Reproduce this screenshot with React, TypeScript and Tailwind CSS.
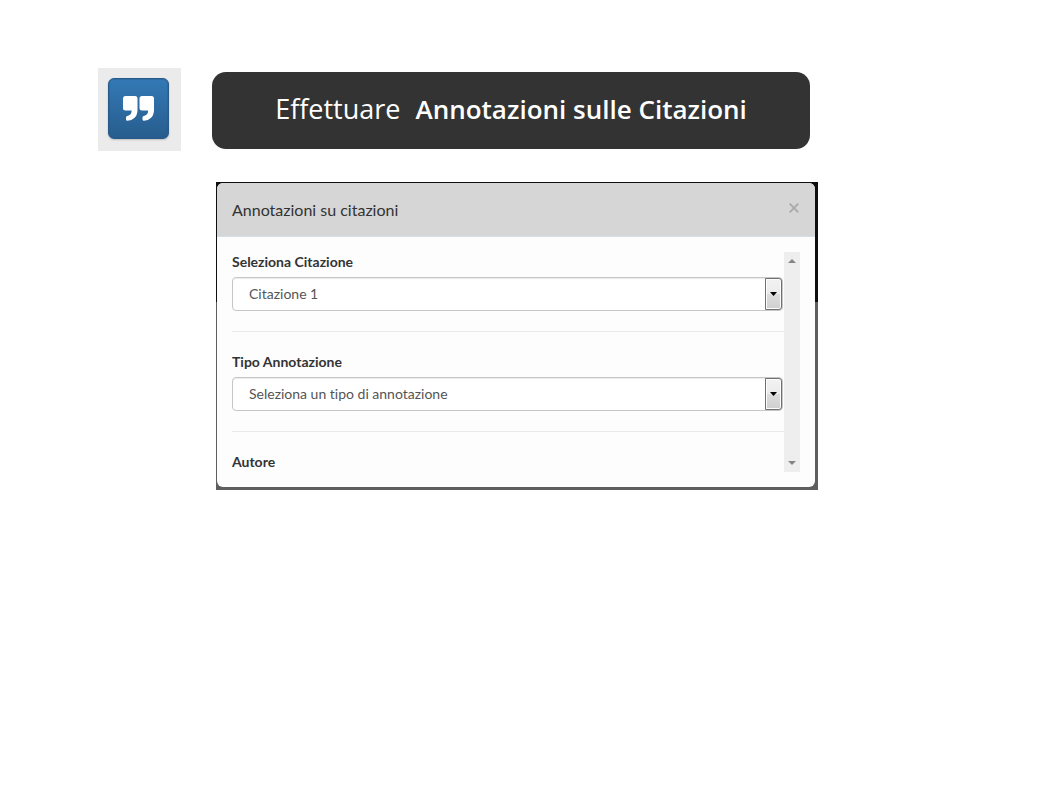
import { useRef } from "react";

type SelectFieldProps = {
  id: string;
  label: string;
  value: string;
};

function SelectField({ id, label, value }: SelectFieldProps) {
  return (
    <div className="mb-5 border-b border-[#eaeaea] pb-5">
      <label htmlFor={id} className="mb-[5px] block text-sm leading-5 font-bold text-[#333333]">
        {label}
      </label>
      <div className="relative mr-px">
        <select
          id={id}
          className="block h-[34px] w-full appearance-none rounded border border-[#c6c6c6] bg-white pr-6 pl-4 text-sm text-[#555555] shadow-[inset_0_1px_1px_rgba(0,0,0,0.08)] [font-variant-ligatures:none]"
        >
          <option>{value}</option>
        </select>
        <span className="pointer-events-none absolute inset-y-px right-px flex w-[17px] items-center justify-center rounded-r-[3px] border border-[#707070] bg-[linear-gradient(#f2f2f2_0%,#ebebeb_50%,#dddddd_50%,#cfcfcf_100%)] shadow-[inset_0_0_0_1px_#fcfcfc]">
          <svg width="7" height="4" viewBox="0 0 7 4" aria-hidden="true">
            <path d="M0 0h7L3.5 4z" fill="#000" />
          </svg>
        </span>
      </div>
    </div>
  );
}

function QuoteBadge() {
  return (
    <div className="flex h-[83px] w-[83px] shrink-0 items-center justify-center bg-[#ebebeb] pr-0.5 pb-0.5">
      <button
        type="button"
        aria-label="Citazioni"
        className="flex h-[61px] w-[61px] items-center justify-center rounded-md border border-[#285a8a] bg-linear-to-b from-[#3379b5] to-[#275d8e] shadow-[inset_0_0_0_1px_rgba(40,90,138,0.4),0_1px_2px_rgba(0,0,0,0.2)]"
      >
        <svg width="31" height="25" viewBox="0 0 31 25" aria-hidden="true">
          <g fill="#fff">
            <path d="M2.500 0h9.500q2.500 0 2.500 2.500V14q0 5-3.200 8-2.800 2.800-6.800 2.800-1.500 0-1.500-1.400v-2.200q0-1.200 1.300-1.300 4.200-.5 4.400-5.400H2.500Q0 14.500 0 12V2.500Q0 0 2.500 0z" />
            <path d="M19 0h9.500Q31 0 31 2.500V14q0 5-3.200 8-2.800 2.800-6.800 2.800-1.500 0-1.500-1.400v-2.200q0-1.200 1.300-1.300 4.200-.5 4.400-5.400H19q-2.500 0-2.500-2.500V2.500Q16.500 0 19 0z" />
          </g>
        </svg>
      </button>
    </div>
  );
}

export default function App() {
  const content = useRef<HTMLDivElement>(null);
  const scroll = (amount: number) => content.current?.scrollBy({ top: amount });

  return (
    <main className="min-h-screen bg-white px-[98px] pt-[68px] font-['Lato',sans-serif] [font-variant-ligatures:none]">
      <header className="flex items-start gap-[31px]">
        <QuoteBadge />
        <h1 className="mt-1 flex min-h-[77px] w-full max-w-[598px] items-center justify-center rounded-[14px] bg-[#333333] pb-1 font-['Trebuchet_MS','Open_Sans',sans-serif] leading-8 text-white">
          <span className="flex items-baseline gap-[15px]">
            <span className="text-[27px]">Effettuare</span>
            <strong className="text-[26px] font-semibold">Annotazioni sulle Citazioni</strong>
          </span>
        </h1>
      </header>

      <section
        aria-labelledby="dialog-title"
        className="mt-[31px] ml-[118px] max-w-[602px] bg-[linear-gradient(#0e0e10_120px,#5e5e5e_120px)] pt-px pr-[3px] pb-[3px] pl-px"
      >
        <div className="overflow-hidden rounded-md bg-[#fdfdfd]">
          <div className="flex items-center justify-between border-b border-[#d3e0e6] bg-[#d6d6d6] px-[15px] py-[15px]">
            <h2 id="dialog-title" className="text-base leading-[23px] text-[#333333]">
              Annotazioni su citazioni
            </h2>
            <button type="button" aria-label="Chiudi" className="mb-1 flex h-4 w-3 items-center justify-center">
              <svg width="10" height="10" viewBox="0 0 10 10" aria-hidden="true">
                <path d="M.7.7l8.600 8.600M9.300.7L.7 9.300" stroke="#a9a9a9" strokeWidth="1.800" />
              </svg>
            </button>
          </div>
          <div className="flex p-[15px]">
            <div ref={content} className="h-[220px] min-w-0 grow overflow-hidden">
              <SelectField id="citazione" label="Seleziona Citazione" value="Citazione 1" />
              <SelectField id="tipo" label="Tipo Annotazione" value="Seleziona un tipo di annotazione" />
              <label htmlFor="autore" className="mb-[5px] block text-sm leading-5 font-bold text-[#333333]">
                Autore
              </label>
              <input id="autore" type="text" className="block h-[34px] w-full rounded border border-[#c6c6c6] px-4 text-sm" />
            </div>
            <div className="flex w-4 shrink-0 flex-col justify-between bg-[#eeeeee]">
              <button type="button" aria-label="Scorri su" onClick={() => scroll(-40)} className="flex h-[18px] items-center justify-center">
                <svg width="8" height="4" viewBox="0 0 8 4" aria-hidden="true">
                  <path d="M0 4h8L4 0z" fill="#858585" />
                </svg>
              </button>
              <button type="button" aria-label="Scorri giù" onClick={() => scroll(40)} className="flex h-[18px] items-center justify-center">
                <svg width="8" height="4" viewBox="0 0 8 4" aria-hidden="true">
                  <path d="M0 0h8L4 4z" fill="#858585" />
                </svg>
              </button>
            </div>
          </div>
        </div>
      </section>
    </main>
  );
}
